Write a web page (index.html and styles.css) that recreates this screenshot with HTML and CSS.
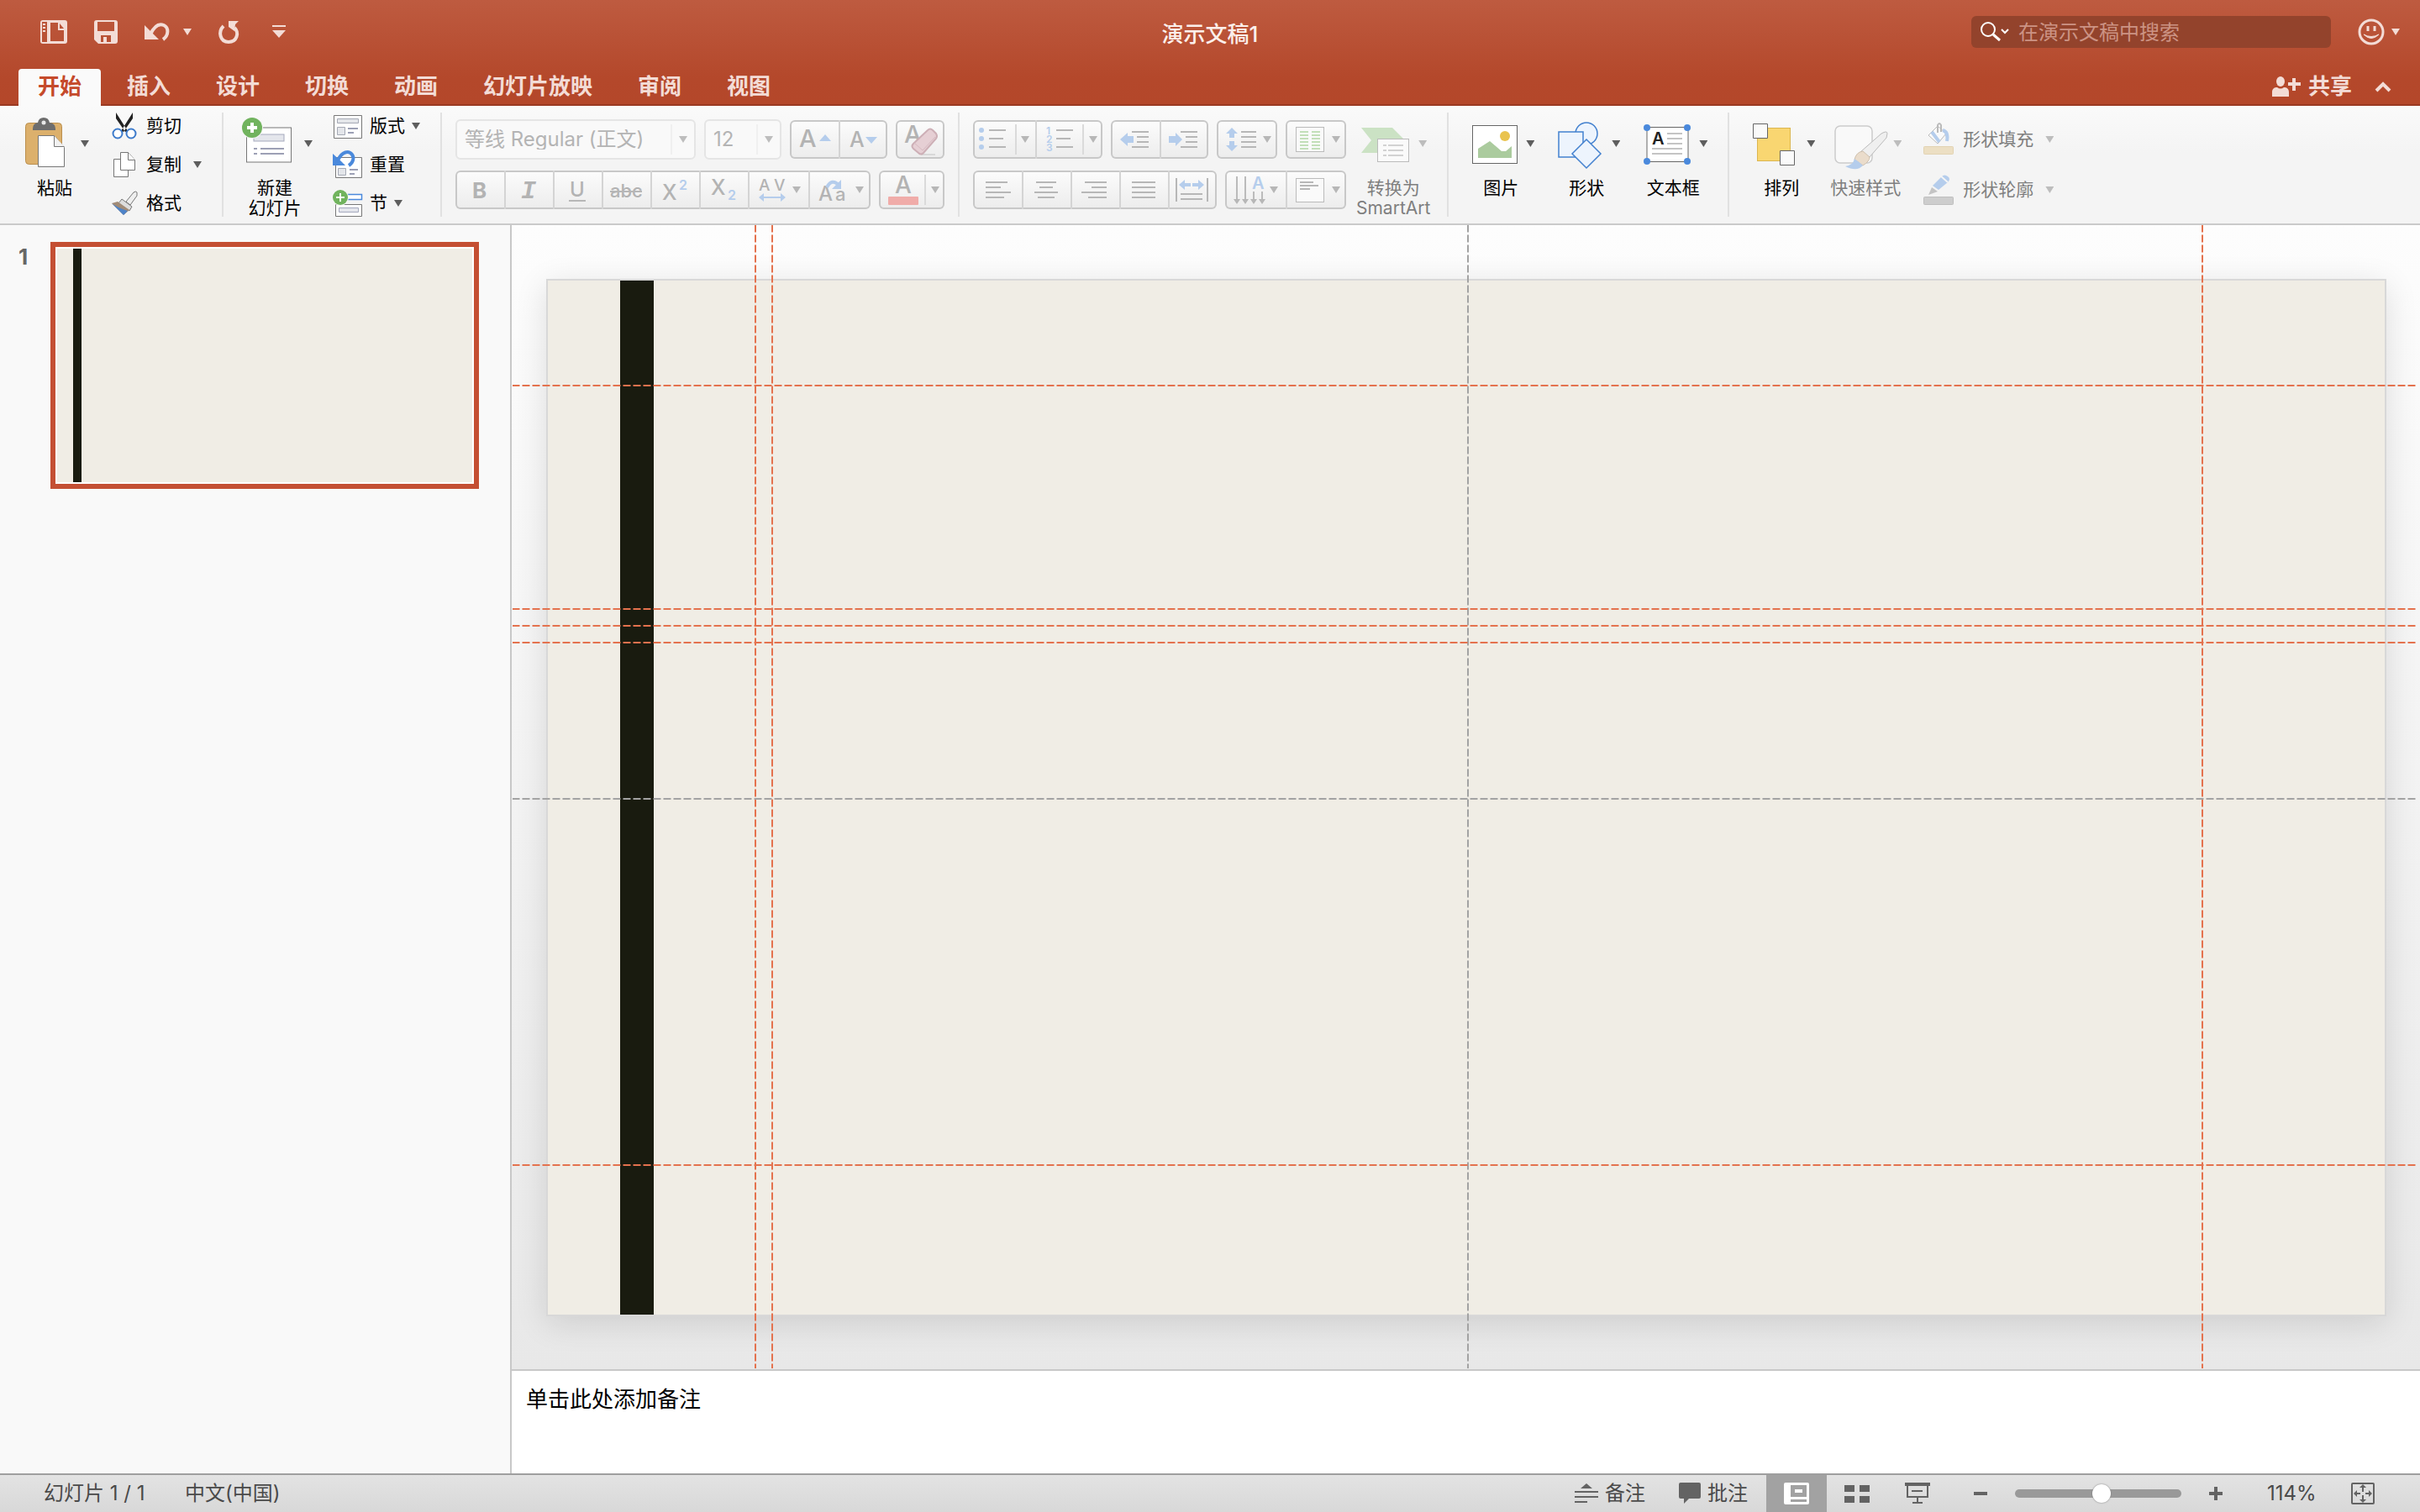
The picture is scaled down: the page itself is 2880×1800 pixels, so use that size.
FILE: index.html
```html
<!DOCTYPE html>
<html lang="zh-CN">
<head>
<meta charset="utf-8">
<title>演示文稿1</title>
<link rel="stylesheet" href="styles.css">
</head>
<body>
<header class="header">
  <div class="titlebar">
    <div class="quick">
      <button aria-label="模板"><svg width="32" height="28" viewBox="0 0 32 28"><path fill-rule="evenodd" d="M3 0h26a3 3 0 0 1 3 3v22a3 3 0 0 1-3 3H3a3 3 0 0 1-3-3V3a3 3 0 0 1 3-3zM2 2v24h6V2zM12 3v22h16V12h-7V3zM23 4v6h5z"/><path d="M3 4h3v2H3zM3 8h3v2H3zM3 12h3v2H3z"/></svg></button>
      <button aria-label="保存"><svg width="28" height="28" viewBox="0 0 28 28"><path fill-rule="evenodd" d="M3 0h22a3 3 0 0 1 3 3v22a3 3 0 0 1-3 3H5l-5-5V3a3 3 0 0 1 3-3zM4 2v11h20V2zM8 18v8h3v-6h4v6h5v-8z"/></svg></button>
      <button aria-label="撤消" class="undo"><svg width="30" height="22" viewBox="0 0 30 22"><path d="M0 3v17h17l-6-6z"/><path d="M7 14C12 3 18 1 23 3c6 3 6 12-1 17" fill="none" stroke="#f3dcd6" stroke-width="4"/></svg><i class="caret"></i></button>
      <button aria-label="重复"><svg width="24" height="28" viewBox="0 0 24 28"><path d="M12 1h12l-4 4-1 8-7-5z"/><path d="M6 7C-1 14 2 26 12 26s13-11 7-17" fill="none" stroke="#f3dcd6" stroke-width="4"/></svg></button>
      <button aria-label="自定义"><svg width="32" height="16" viewBox="0 0 32 16"><path d="M8 0h16v2H8zM8 6h16l-8 9z"/></svg></button>
    </div>
    <h1 class="title">演示文稿1</h1>
    <div class="right-tools">
      <label class="search"><svg width="36" height="24" viewBox="0 0 36 24" fill="none" stroke="#fff" stroke-width="2"><circle cx="10" cy="9" r="8"/><path d="M16 15l8 7" stroke-width="3"/><path d="M26 9l4 4 4-4"/></svg><input type="search" aria-label="搜索" placeholder="在演示文稿中搜索"></label>
      <button aria-label="反馈" class="smile"><svg width="32" height="32" viewBox="0 0 32 32" fill="none" stroke="#f3dcd6" stroke-width="3"><circle cx="16" cy="16" r="14"/><path d="M12 9v6M20 9v6"/><path d="M7 19q9 9 18 0q-9 5-18 0z" stroke-width="1" fill="#f3dcd6"/></svg><i class="caret"></i></button>
    </div>
  </div>
  <nav class="tabs">
    <button class="tab active">开始</button><button class="tab">插入</button><button class="tab">设计</button><button class="tab">切换</button><button class="tab">动画</button><button class="tab">幻灯片放映</button><button class="tab">审阅</button><button class="tab">视图</button>
    <button class="share"><svg width="36" height="26" viewBox="0 0 36 26"><ellipse cx="10" cy="7" rx="5" ry="6"/><path d="M0 25v-5c0-5 3-6 6-6q4 3 8 0c3 0 6 1 6 6v5zM24 3h4v5h6v4h-6v6h-4v-6h-5V8h5z"/></svg>共享</button>
    <button class="collapse" aria-label="折叠功能区"><svg width="20" height="14" viewBox="0 0 20 14"><path d="M2 11l8-8 8 8" fill="none" stroke="#f3dcd6" stroke-width="4"/></svg></button>
  </nav>
</header>

<section class="ribbon" aria-label="开始">
  <div class="group">
    <button class="big"><span class="art"><svg width="48" height="62" viewBox="0 0 48 62"><rect x=".5" y="6.500" width="43" height="49" rx="4" fill="#dcb06c" stroke="#bb8f4e"/><path d="M9 13q0-6 6-7 1-6 7-6t7 6q7 1 7 7v2H9z" fill="#6d6d6d"/><circle cx="22" cy="6" r="2.500" fill="#e8e8e8"/><path d="M15.500 21.500h19l12 14v23h-31z" fill="#fff" stroke="#777"/><path d="M34.500 21.500v13h12" fill="#f1f1f1" stroke="#777"/></svg><i class="caret"></i></span><span class="label">粘贴</span></button>
    <div class="stack wide">
      <button><svg width="32" height="32" viewBox="0 0 32 32"><path d="M6 0l14 22-3 1L6 7zM26 0L12 22l3 1L26 7z" fill="#222"/><g fill="#fff" stroke="#3d7bcb" stroke-width="2"><circle cx="8" cy="25" r="5.500"/><circle cx="24" cy="25" r="5.500"/></g></svg>剪切</button>
      <button><svg width="32" height="32" viewBox="0 0 32 32" fill="#fff" stroke="#777"><path d="M3.500 9.500h12l5 5v16h-17z"/><path d="M11.500 1.500h9l8 9v12h-17z"/><path d="M20.500 1.500v9h8"/></svg>复制<i class="caret"></i></button>
      <button><svg width="32" height="32" viewBox="0 0 32 32"><path d="M18 14l9-11q3-2 4 0v4l-8 11z" fill="#eee" stroke="#777"/><path d="M13 11l12 9-3 5-13-9z" fill="#ddd" stroke="#777"/><path d="M8 14l14 10-7 6L1 16z" fill="#a18b77"/><path d="M1 16q6 5 19 9l-5 5z" fill="#4e83c8"/></svg>格式</button>
    </div>
  </div>
  <span class="sep"></span>
  <div class="group">
    <button class="big"><span class="art"><svg width="60" height="62" viewBox="0 0 60 62"><rect x="5.500" y="12" width="53" height="41" fill="#fff" stroke="#777"/><rect x="14" y="20" width="36" height="8" fill="#e4e6ec" stroke="#a5a9bd"/><path d="M14 37h4M22 37h28M14 43h4M22 43h28" stroke="#9ca0b5" stroke-width="2"/><circle cx="12" cy="12" r="13" fill="#f6f6f6"/><circle cx="12" cy="12" r="12" fill="#71b35e"/><path d="M12 6v12M6 12h12" stroke="#fff" stroke-width="4"/></svg><i class="caret"></i></span><span class="label">新建<br>幻灯片</span></button>
    <div class="stack">
      <button><svg width="38" height="32" viewBox="0 0 38 32"><path d="M3.500 3.500h33v27h-33z" fill="#fff" stroke="#777"/><path d="M7.500 7.500h25v5h-25zM7.500 17.500h9v9h-9z" fill="#e4e6ea" stroke="#a5a9b5"/><path d="M20 19h12M20 24h7" stroke="#9ca0b5" stroke-width="2"/></svg>版式<i class="caret"></i></button>
      <button><svg width="38" height="34" viewBox="0 0 38 34"><path d="M5.500 8.500h31v24h-31z" fill="#fff" stroke="#777"/><path d="M8.500 21.500h9v8h-9z" fill="#e4e6ea" stroke="#a5a9b5"/><path d="M22 23h10M22 28h6" stroke="#9ca0b5" stroke-width="2"/><path d="M2 4v14h15l-5-5z" fill="#4a89dc"/><path d="M8 12C13 1 21 0 25 5c3 4 1 10-4 13" fill="none" stroke="#4a89dc" stroke-width="4"/></svg>重置</button>
      <button><svg width="38" height="34" viewBox="0 0 38 34"><path d="M18 6.500h18.500v6H18z" fill="#fff" stroke="#4a89dc" stroke-width="1.500"/><path d="M5.500 18.500h31v14h-31z" fill="#fff" stroke="#777"/><path d="M9.500 22.500h23v5h-23z" fill="#e4e6ec" stroke="#a5a9bd"/><circle cx="11" cy="10" r="10" fill="#f6f6f6"/><circle cx="11" cy="10" r="9" fill="#71b35e"/><path d="M11 5v10M6 10h10" stroke="#fff" stroke-width="2"/></svg>节<i class="caret"></i></button>
    </div>
  </div>
  <span class="sep"></span>
  <div class="group tight">
    <div class="rows">
      <div class="row">
        <span class="combo font"><select aria-label="字体" disabled><option>等线 Regular (正文)</option></select><i class="caret"></i></span>
        <span class="combo size"><select aria-label="字号" disabled><option>12</option></select><i class="caret"></i></span>
        <span class="btns">
          <button disabled aria-label="增大字号"><svg width="58" height="46"><text x="11" y="32" font-size="29">A</text><path class="blue" d="M35 25l7-8 7 8z"/></svg></button>
          <button disabled aria-label="减小字号"><svg width="58" height="46"><text x="13" y="32" font-size="25">A</text><path class="blue" d="M32 20h14l-7 8z"/></svg></button>
        </span>
        <span class="btns"><button disabled aria-label="清除格式"><svg width="58" height="46"><text x="10" y="27" font-size="29">A</text><path d="M30 41h17" stroke="#d8d8d8" stroke-width="2"/><path d="M38 12q3-3 6 0l4 4q2 3 0 6L33 39q-3 3-6 0l-6-5q-3-3 0-6z" fill="#e6cfd4" stroke="#cdafb6" stroke-width="2"/><path d="M22 27l10 9 15-16" fill="none" stroke="#d6b9c0"/></svg></button></span>
      </div>
      <div class="row">
        <span class="btns">
          <button disabled aria-label="加粗"><svg width="58" height="46"><text class="bold" x="20" y="33" font-size="26">B</text></svg></button>
          <button disabled aria-label="倾斜"><svg width="58" height="46"><text class="mono" x="20" y="33" font-size="30">I</text></svg></button>
          <button disabled aria-label="下划线"><svg width="58" height="46"><text x="20" y="31" font-size="24">U</text><path class="gray" d="M19 35h20v2H19z"/></svg></button>
          <button disabled aria-label="删除线"><svg width="58" height="46"><text x="10" y="32" font-size="22">abc</text><path class="gray" d="M10 24h38v2H10z"/></svg></button>
          <button disabled aria-label="上标"><svg width="58" height="46"><text x="14" y="35" font-size="25">X</text><text class="blue" x="34" y="23" font-size="16">2</text></svg></button>
          <button disabled aria-label="下标"><svg width="58" height="46"><text x="14" y="29" font-size="25">X</text><text class="blue" x="34" y="35" font-size="16">2</text></svg></button>
          <button disabled aria-label="字符间距"><svg width="72" height="46"><text x="13" y="24" font-size="19">A</text><text x="31" y="24" font-size="19">V</text><path class="blue" d="M13 32l6-5v4h20v-4l6 5-6 5v-4H19v4z"/><path class="tri" d="M53 19h10l-5 8z"/></svg></button>
          <button disabled aria-label="更改大小写"><svg width="74" height="46"><text x="12" y="36" font-size="24">A</text><text x="32" y="36" font-size="22">a</text><path d="M22 20q6-11 14-3" fill="none" stroke="#b5cdec" stroke-width="4"/><path class="blue" d="M39 11v11H28z"/><path class="tri" d="M56 19h10l-5 8z"/></svg></button>
        </span>
        <span class="btns"><button disabled aria-label="字体颜色"><svg width="78" height="46"><text x="19" y="27" font-size="28">A</text><rect x="11" y="31" width="36" height="10" rx="1" fill="#f0aca9"/><path class="line" d="M54 5h2v36h-2z"/><path class="tri" d="M62 19h10l-5 8z"/></svg></button></span>
      </div>
    </div>
  </div>
  <span class="sep"></span>
  <div class="group tight">
    <div class="rows">
      <div class="row">
        <span class="btns">
          <button disabled aria-label="项目符号"><svg width="74" height="46"><g class="blue"><circle cx="10" cy="12" r="3"/><circle cx="10" cy="22" r="3"/><circle cx="10" cy="32" r="3"/></g><path class="gray" d="M19 11h20v2H19zM19 21h17v2H19zM19 31h20v2H19z"/><path class="line" d="M50 5h2v36h-2z"/><path class="tri" d="M57 19h10l-5 8z"/></svg></button>
          <button disabled aria-label="编号"><svg width="80" height="46"><g font-size="12"><text class="blue" x="13" y="17">1</text><text class="blue" x="13" y="27">2</text><text class="blue" x="13" y="37">3</text></g><path class="gray" d="M25 11h20v2H25zM25 21h17v2H25zM25 31h20v2H25z"/><path class="line" d="M56 5h2v36h-2z"/><path class="tri" d="M64 19h10l-5 8z"/></svg></button>
        </span>
        <span class="btns">
          <button disabled aria-label="减少缩进"><svg width="58" height="46"><path class="gray" d="M25 13h20v2H25zM31 19h14v2H31zM31 25h14v2H31zM25 31h20v2H25z"/><path class="blue" d="M11 23l9-8v4h7v8h-7v4z"/></svg></button>
          <button disabled aria-label="增加缩进"><svg width="58" height="46"><path class="gray" d="M25 13h20v2H25zM31 19h14v2H31zM31 25h14v2H31zM25 31h20v2H25z"/><path class="blue" d="M27 23l-8-8v4h-8v8h8v4z"/></svg></button>
        </span>
        <span class="btns"><button disabled aria-label="行距"><svg width="72" height="46"><path class="blue" d="M18 9l7 7h-4v5h-6v-5h-4zM18 37l7-7h-4v-5h-6v5h-4z"/><path class="gray" d="M29 13h18v2H29zM29 19h18v2H29zM29 25h18v2H29zM29 31h18v2H29z"/><path class="tri" d="M55 19h10l-5 8z"/></svg></button></span>
        <span class="btns"><button disabled aria-label="分栏"><svg width="72" height="46"><rect x="12.500" y="8.500" width="33" height="29" fill="#fafafa" stroke="#bbb"/><path d="M17 14h10M31 14h10M17 18h10M31 18h10M17 22h10M31 22h10M17 26h10M31 26h10M17 30h10M31 30h10M17 34h10M31 34h10" stroke="#c3dfb9" stroke-width="2"/><path class="tri" d="M55 19h10l-5 8z"/></svg></button></span>
      </div>
      <div class="row">
        <span class="btns">
          <button disabled aria-label="左对齐"><svg width="58" height="46"><path class="gray" d="M15 13h26v2H15zM15 19h18v2H15zM15 25h30v2H15zM15 31h22v2H15z"/></svg></button>
          <button disabled aria-label="居中"><svg width="58" height="46"><path class="gray" d="M17 13h24v2H17zM21 19h16v2H21zM15 25h28v2H15zM19 31h20v2H19z"/></svg></button>
          <button disabled aria-label="右对齐"><svg width="58" height="46"><path class="gray" d="M17 13h26v2H17zM25 19h18v2H25zM13 25h30v2H13zM21 31h22v2H21z"/></svg></button>
          <button disabled aria-label="两端对齐"><svg width="58" height="46"><path class="gray" d="M15 13h28v2H15zM15 19h28v2H15zM15 25h28v2H15zM15 31h28v2H15z"/></svg></button>
          <button disabled aria-label="分散对齐"><svg width="58" height="46"><path class="gray" d="M9 9h2v28H9zM46 9h2v28h-2zM15 27h26v2H15zM15 33h26v2H15z"/><path class="blue" d="M13 17l7-6v4h7v4h-7v4zM43 17l-7-6v4h-7v4h7v4z"/></svg></button>
        </span>
        <span class="btns">
          <button disabled aria-label="文字方向"><svg width="72" height="46"><path d="M14 7v28M24 7v28M34 25v10M44 25v10" stroke="#bbb" stroke-width="2"/><path class="tri" d="M10 34h8l-4 6zM20 34h8l-4 6zM30 34h8l-4 6zM40 34h8l-4 6z"/><text class="blue" x="32" y="22" font-size="20">A</text><path class="tri" d="M53 19h10l-5 8z"/></svg></button>
          <button disabled aria-label="对齐文本"><svg width="72" height="46"><rect x="12.500" y="9.500" width="33" height="28" fill="#fafafa" stroke="#bbb"/><path class="gray" d="M17 13h16v2H17zM17 17h22v2H17zM17 21h12v2H17z"/><path class="tri" d="M55 19h10l-5 8z"/></svg></button>
        </span>
      </div>
    </div>
    <button class="big smart" disabled><span class="art"><svg width="58" height="62" viewBox="0 0 58 62"><path d="M0 12h37l15 15-15 15H0l12-15z" fill="#cbe2c4"/><rect x="19.500" y="25.500" width="37" height="27" fill="#fafafa" stroke="#bbb"/><path d="M26 33h4M32 33h18M26 39h4M32 39h18M26 45h4M32 45h18" stroke="#d2d2d2" stroke-width="2"/></svg><i class="caret"></i></span><span class="label">转换为<br>SmartArt</span></button>
  </div>
  <span class="sep"></span>
  <div class="group insert">
    <button class="big"><span class="art"><svg width="54" height="62" viewBox="0 0 54 62"><rect x=".5" y="9.500" width="53" height="45" fill="#fff" stroke="#666"/><path d="M7 48V37l14-9 14 12 5 0 7-6v14z" fill="#abcb9e"/><circle cx="39" cy="22" r="6" fill="#e9c34f"/></svg><i class="caret"></i></span><span class="label">图片</span></button>
    <button class="big"><span class="art"><svg width="54" height="62" viewBox="0 0 54 62" fill="#edf4fd" stroke="#4381cf" stroke-width="1.500"><circle cx="34" cy="19" r="13"/><path d="M1 17h29v30H1z"/><path d="M34 26l17 17-17 17-17-17z"/></svg><i class="caret"></i></span><span class="label">形状</span></button>
    <button class="big"><span class="art"><svg width="56" height="62" viewBox="0 0 56 62"><rect x="4" y="11.500" width="49" height="41" fill="#fff" stroke="#666"/><text x="10" y="32" font-size="20" font-weight="600" class="dark">A</text><path d="M28 19h18M28 25h18M28 31h18M10 37h36M10 43h36" stroke="#c4c4c4" stroke-width="2"/><g fill="#4a89dc"><circle cx="4" cy="12" r="4"/><circle cx="52" cy="12" r="4"/><circle cx="4" cy="52" r="4"/><circle cx="52" cy="52" r="4"/></g></svg><i class="caret"></i></span><span class="label">文本框</span></button>
  </div>
  <span class="sep"></span>
  <div class="group format">
    <button class="big"><span class="art"><svg width="54" height="62" viewBox="0 0 54 62"><rect x="5.500" y="12.500" width="39" height="39" fill="#f9d671" stroke="#dcb64f"/><path d="M.5 7.500h17v17H.5zM32.500 39.500h17v17h-17z" fill="#fafafa" stroke="#666"/></svg><i class="caret"></i></span><span class="label">排列</span></button>
    <button class="big" disabled><span class="art"><svg width="60" height="62" viewBox="0 0 60 62"><rect x="1" y="10" width="44" height="44" rx="6" fill="#f9f9f9" stroke="#ccc" stroke-width="1.500"/><path d="M31 41l25-22q7-4 7 0l-1 5-21 24z" fill="#efefef" stroke="#bbb"/><path d="M24 50q2-9 10-10l8 7q0 5-8 10z" fill="#eadccb" stroke="#cfc0ad"/><path d="M13 58q9-1 11-9 6 4 10 8-7 8-21 1z" fill="#b5cdec"/></svg><i class="caret"></i></span><span class="label">快速样式</span></button>
    <div class="stack wide two">
      <button disabled><svg width="40" height="40" viewBox="0 0 40 40"><rect x="3.500" y="28.500" width="35" height="9" rx="1" fill="#ecdfc3" stroke="#e2d3b2"/><path d="M20 4l10 9-10 12L9 15z" fill="#fafafa" stroke="#bbb"/><path d="M13 11l9 12M26 9q7 2 5 13" stroke="#b5cdec" stroke-width="4" fill="none"/><path d="M20 12V3q2-4 4 0v8" fill="none" stroke="#bbb" stroke-width="2"/></svg>形状填充<i class="caret"></i></button>
      <button disabled><svg width="40" height="40" viewBox="0 0 40 40"><rect x="3.500" y="28.500" width="35" height="9" rx="1" fill="#cdcdcd" stroke="#bfbfbf"/><path d="M14 15L25 4q3-3 7 0t0 7L21 20z" fill="#b5cdec"/><path d="M13 17l7 5-11 4z" fill="#c4c4c4"/><path d="M23 3l9 8" stroke="#f5f5f5" stroke-width="2"/></svg>形状轮廓<i class="caret"></i></button>
    </div>
  </div>
</section>

<main class="workspace">
  <aside class="slides">
    <span class="number">1</span>
    <button class="thumb" aria-label="幻灯片 1"><span class="page"><span class="bar"></span></span></button>
  </aside>
  <div class="editor">
    <div class="canvas">
      <div class="slide"><div class="bar"></div></div>
      <i class="guide v v1"></i><i class="guide v v2"></i><i class="guide v v3 mid"></i><i class="guide v v4"></i>
      <i class="guide h h1"></i><i class="guide h h2"></i><i class="guide h h3"></i><i class="guide h h4"></i><i class="guide h h5 mid"></i><i class="guide h h6"></i>
    </div>
    <textarea class="notes" aria-label="备注" placeholder="单击此处添加备注"></textarea>
  </div>
</main>

<footer class="status">
  <span class="count">幻灯片 1 / 1</span><span>中文(中国)</span>
  <div class="views">
    <button class="text"><svg width="28" height="24" viewBox="0 0 28 24"><path d="M14 0l7 6H7zM0 9h28v2H0zM0 15h28v2H0zM0 21h15v2H0z"/></svg>备注</button>
    <button class="text comments"><svg width="26" height="26" viewBox="0 0 26 26"><path d="M2 0h22q2 0 2 2v15q0 2-2 2H12l-6 6v-6H2q-2 0-2-2V2q0-2 2-2z"/></svg>批注</button>
    <button class="view on" aria-label="普通视图"><svg width="30" height="26" viewBox="0 0 30 26"><rect width="30" height="26" rx="2" fill="#fff"/><path d="M8 3h19v14H8zM8 20h19v3H8z" fill="#a2a2a2"/><path d="M13 8h9v4h-9z" fill="#fff"/></svg></button>
    <button class="view" aria-label="幻灯片浏览"><svg width="30" height="22" viewBox="0 0 30 22"><path d="M0 1h12v8H0zM18 1h12v8H18zM0 14h12v8H0zM18 14h12v8H18z"/></svg></button>
    <button class="view" aria-label="幻灯片放映"><svg width="30" height="26" viewBox="0 0 30 26"><path d="M0 0h30v4H0zM8 9h13v2H8zM14 18h2v5h-2zM9 23h12v2H9z"/><path d="M3 4v13h24V4" fill="none" stroke="#636363" stroke-width="2"/></svg></button>
  </div>
  <div class="zoom">
    <button aria-label="缩小"><svg width="18" height="18" viewBox="0 0 18 18"><path d="M1 7h16v4H1z"/></svg></button>
    <input type="range" aria-label="缩放" min="0" max="100" value="52">
    <button aria-label="放大"><svg width="18" height="18" viewBox="0 0 18 18"><path d="M7 1h4v6h6v4h-6v6H7v-6H1V7h6z"/></svg></button>
    <output>114%</output>
    <button aria-label="适应窗口"><svg width="28" height="26" viewBox="0 0 28 26"><rect x="1" y="1" width="26" height="24" rx="1" fill="none" stroke="#636363" stroke-width="2"/><path d="M14 2l4 4h-3v5h-2V6h-3zM14 24l4-4h-3v-5h-2v5h-3zM3 13l4-4v3h4v2H7v3zM25 13l-4-4v3h-4v2h4v3z"/></svg></button>
  </div>
</footer>
</body>
</html>
```

FILE: styles.css
```css
* { box-sizing: border-box; }
body {
  margin: 0;
  min-height: 100vh;
  display: flex;
  flex-direction: column;
  font-family: Inter, "Noto Sans CJK SC", sans-serif;
  font-size: 21px;
  line-height: 24px;
  color: #000;
  background: #fff;
}
button, select, input, textarea {
  font: inherit;
  color: inherit;
  border: 0;
  margin: 0;
  padding: 0;
  background: none;
}
svg { display: block; flex: none; overflow: visible; }
.caret {
  flex: none;
  width: 10px;
  height: 8px;
  background: #5e5e5e;
  clip-path: polygon(0 0, 100% 0, 50% 100%);
}

/* Title bar and tabs */
.header {
  color: #f3dcd6;
  background: linear-gradient(#be5b40, #b4482b 75%, #b4472a);
  border-bottom: 2px solid #9a3a22;
}
.header svg { fill: #f3dcd6; }
.header svg[fill="none"] { fill: none; }
.header .caret { background: #f3dcd6; }
.titlebar {
  height: 76px;
  display: grid;
  grid-template-columns: 1fr auto 1fr;
  align-items: center;
}
.quick { display: flex; align-items: center; gap: 32px; padding-left: 48px; }
.quick button { display: flex; align-items: center; gap: 16px; }
.title { margin: 6px 0 0; font-size: 26px; font-weight: 500; line-height: 30px; color: #fbefeb; }
.right-tools { display: flex; align-items: center; justify-content: flex-end; padding-right: 24px; }
.search {
  width: 428px;
  height: 38px;
  padding: 0 10px;
  display: flex;
  align-items: center;
  gap: 10px;
  border-radius: 6px;
  background: #93432c;
}
.search input { flex: 1; min-width: 0; padding-top: 2px; font-size: 24px; line-height: 34px; outline: 0; }
.search input::placeholder { color: #cc9384; opacity: 1; }
.smile { display: flex; align-items: center; gap: 8px; margin-left: 32px; }
.tabs { display: flex; align-items: stretch; gap: 8px; padding: 6px 34px 0 22px; margin-bottom: -2px; }
.tab { height: 44px; padding: 0 23px 2px; font-size: 26px; font-weight: 600; border-radius: 4px 4px 0 0; }
.tab.active { color: #c54a2b; background: #fafafa; }
.share { margin-left: auto; display: flex; align-items: center; gap: 7px; padding-bottom: 2px; font-size: 26px; font-weight: 600; }
.collapse { margin-left: 19px; }

/* Ribbon */
.ribbon {
  display: flex;
  height: 142px;
  padding-left: 30px;
  background: linear-gradient(#fafafa, #f4f4f4 40%, #f4f4f4);
  border-bottom: 2px solid #cacaca;
}
.sep { flex: none; width: 2px; margin: 8px 0; background: #e1e1e1; }
.group { display: flex; padding: 0 24px 0 22px; gap: 22px; }
.group:first-child { padding-left: 0; gap: 26px; }
.group.tight { padding: 0 16px; gap: 10px; }
.group.insert { padding: 0 24px 0 28px; gap: 28px; }
.group.format { padding: 0 28px; gap: 18px; }
.big { display: flex; flex-direction: column; align-items: center; padding-top: 14px; white-space: nowrap; }
.big.smart { padding: 14px 2px 0; }
.art { display: flex; align-items: center; gap: 10px; height: 62px; margin-bottom: 10px; }
.group:first-child .art { gap: 18px; }
.group:nth-child(3) .art { gap: 14px; }
.label { padding-right: 6px; line-height: 24px; text-align: center; }
.smart .label { padding-right: 2px; }
.stack { display: grid; grid-template-rows: repeat(3, 46px); justify-items: start; padding-top: 1px; }
.stack button { display: flex; align-items: center; gap: 8px; white-space: nowrap; }
.stack.wide button { gap: 10px; }
.stack.wide .caret { margin-left: 4px; }
.stack.two { grid-template-rows: repeat(2, 60px); padding-top: 10px; }
.big:disabled, .stack button:disabled { color: #7f7f7f; }
:disabled .caret, .combo .caret { background: #bdbdbd; }
.rows { display: grid; grid-template-rows: 48px 48px; gap: 12px; padding-top: 16px; align-content: start; }
.row { display: flex; align-items: center; gap: 10px; }
.combo {
  display: flex;
  align-items: center;
  height: 48px;
  padding: 0 8px 0 9px;
  border: 2px solid #e5e5e5;
  border-radius: 6px;
  background: #f9f9f9;
}
.combo.font { width: 286px; }
.combo.size { width: 92px; }
.combo select {
  flex: 1;
  min-width: 0;
  height: 36px;
  margin-right: 8px;
  appearance: none;
  font-size: 24px;
  color: #b4b4b4;
  opacity: 1;
  border-right: 2px solid #f0f0f0;
}
.btns {
  display: flex;
  height: 46px;
  border-radius: 6px;
  background: linear-gradient(#fcfcfc, #ececec);
  box-shadow: inset 0 0 0 2px #c8c8c8;
}
.btns button + button { box-shadow: inset 2px 0 #d4d4d4; }
.btns text { fill: #b3b3b3; font-weight: 500; }
.btns text.bold { font-weight: 700; }
.btns .mono { font-family: "Liberation Mono", monospace; font-style: italic; font-weight: 700; }
.gray, .tri { fill: #b7b7b7; }
.line { fill: #dadada; }
.blue, .btns text.blue { fill: #b5cdec; font-weight: 600; }
.dark { fill: #222; }

/* Workspace */
.workspace { flex: 1; display: grid; grid-template-columns: 609px 1fr; }
.slides {
  display: flex;
  align-items: flex-start;
  padding: 20px 37px 20px 22px;
  background: #f9f9f9;
  border-right: 2px solid #c8c8c8;
}
.number { width: 38px; padding-top: 6px; font-size: 26px; font-weight: 700; color: #666; }
.thumb { flex: 1; padding: 2px; border: 6px solid #c44f33; background: #fff; }
.page { display: flex; height: 278px; background: #f0ede5; }
.page .bar { width: 10px; margin-left: 19px; background: #191b0f; }
.editor { display: flex; flex-direction: column; min-width: 0; }
.canvas {
  position: relative;
  flex: 1;
  overflow: hidden;
  padding: 64px 40px 63px 41px;
  background: linear-gradient(#fdfdfd, #e8e8e8);
}
.slide {
  display: flex;
  height: 100%;
  border: 2px solid #d8d8d8;
  background: #f0ede5;
  box-shadow: 0 8px 36px rgba(0, 0, 0, .12);
}
.slide .bar { width: 40px; margin-left: 86px; background: #191b0f; }
.guide { --c: #e4724e; position: absolute; }
.guide.mid { --c: #a3a3a3; }
.v {
  top: 0; bottom: 1px; width: 2px;
  background: repeating-linear-gradient(var(--c) 0 8px, transparent 9px 11px, var(--c) 12px);
}
.h {
  left: 1px; right: 3px; height: 2px;
  background: repeating-linear-gradient(90deg, var(--c) 0 8px, transparent 9px 11px, var(--c) 12px);
}
.v1 { left: 289px; } .v2 { left: 309px; } .v3 { left: 1137px; } .v4 { left: 2011px; }
.h1 { top: 190px; } .h2 { top: 456px; } .h3 { top: 476px; } .h4 { top: 496px; } .h5 { top: 682px; } .h6 { top: 1118px; }
.notes {
  flex: none;
  height: 124px;
  padding: 18px 17px;
  font-size: 26px;
  line-height: 32px;
  resize: none;
  outline: 0;
  border-top: 2px solid #c8c8c8;
  background: #fff;
}
.notes::placeholder { color: #000; opacity: 1; }

/* Status bar */
.status {
  display: flex;
  align-items: center;
  height: 46px;
  padding: 0 54px 0 52px;
  font-size: 24px;
  color: #4a4a4a;
  background: linear-gradient(#e3e3e3, #d8d8d8);
  border-top: 2px solid #9f9f9f;
}
.status svg { fill: #636363; }
.count { width: 168px; }
.views { margin-left: auto; display: flex; align-self: stretch; align-items: center; }
.status button { display: flex; align-items: center; justify-content: center; }
.text { gap: 8px; margin-right: 40px; }
.status .comments { margin-right: 22px; }
.view { width: 72px; height: 100%; }
.view.on { background: #a2a2a2; }
.zoom { display: flex; align-items: center; margin-left: 30px; }
.zoom input { appearance: none; width: 198px; height: 24px; margin: 0 32px; }
.zoom input::-webkit-slider-runnable-track { height: 10px; border-radius: 5px; background: #999; }
.zoom input::-webkit-slider-thumb {
  appearance: none;
  width: 22px;
  height: 22px;
  margin-top: -6px;
  border-radius: 50%;
  background: #fff;
  box-shadow: 0 0 2px #777;
}
.zoom output { width: 100px; margin: 0 0 0 52px; }
```
